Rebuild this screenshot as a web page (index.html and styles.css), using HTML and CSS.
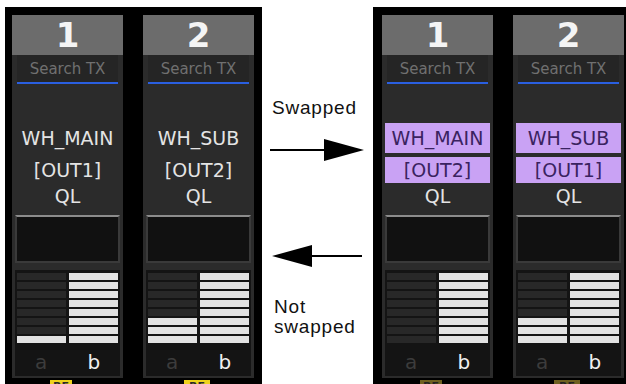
FILE: index.html
```html
<!DOCTYPE html>
<html>
<head>
<meta charset="utf-8">
<link rel="stylesheet" href="styles.css">
</head>
<body>
<div class="panel panel-left">
  <div class="col">
    <div class="strip">
      <div class="hdr">1</div>
      <div class="search">Search TX</div>
      <div class="name">WH_MAIN</div>
      <div class="out">[OUT1]</div>
      <div class="ql">QL</div>
      <div class="box"></div>
      <div class="meter">
        <div class="mcol"><i class="seg"></i><i class="seg"></i><i class="seg"></i><i class="seg"></i><i class="seg"></i><i class="seg"></i><i class="seg"></i><i class="seg on"></i></div>
        <div class="mcol"><i class="seg on"></i><i class="seg on"></i><i class="seg on"></i><i class="seg on"></i><i class="seg on"></i><i class="seg on"></i><i class="seg on"></i><i class="seg on"></i></div>
      </div>
      <div class="labels"><span class="la">a</span><span class="lb">b</span></div>
    </div>
    <div class="tag">RE</div>
  </div>
  <div class="col">
    <div class="strip">
      <div class="hdr">2</div>
      <div class="search">Search TX</div>
      <div class="name">WH_SUB</div>
      <div class="out">[OUT2]</div>
      <div class="ql">QL</div>
      <div class="box"></div>
      <div class="meter">
        <div class="mcol"><i class="seg"></i><i class="seg"></i><i class="seg"></i><i class="seg"></i><i class="seg"></i><i class="seg on"></i><i class="seg on"></i><i class="seg on"></i></div>
        <div class="mcol"><i class="seg on"></i><i class="seg on"></i><i class="seg on"></i><i class="seg on"></i><i class="seg on"></i><i class="seg on"></i><i class="seg on"></i><i class="seg on"></i></div>
      </div>
      <div class="labels"><span class="la">a</span><span class="lb">b</span></div>
    </div>
    <div class="tag tag-2">RE</div>
  </div>
</div>

<div class="middle">
  <div class="caption caption-top">Swapped</div>
  <svg class="arrow arrow-right" width="100" height="24" viewBox="0 0 100 24">
    <line x1="6" y1="12" x2="62" y2="12" stroke="#000" stroke-width="2"/>
    <polygon points="60,1 100,12 60,23" fill="#000"/>
  </svg>
  <svg class="arrow arrow-left" width="100" height="24" viewBox="0 0 100 24">
    <line x1="40" y1="12" x2="101" y2="12" stroke="#000" stroke-width="2"/>
    <polygon points="10,12 50,1 50,23" fill="#000"/>
  </svg>
  <div class="caption caption-bottom">Not<br>swapped</div>
</div>

<div class="panel panel-right">
  <div class="col">
    <div class="strip">
      <div class="hdr">1</div>
      <div class="search">Search TX</div>
      <div class="name hl">WH_MAIN</div>
      <div class="out hl">[OUT2]</div>
      <div class="ql">QL</div>
      <div class="box"></div>
      <div class="meter">
        <div class="mcol"><i class="seg"></i><i class="seg"></i><i class="seg"></i><i class="seg"></i><i class="seg"></i><i class="seg"></i><i class="seg"></i><i class="seg"></i></div>
        <div class="mcol"><i class="seg on"></i><i class="seg on"></i><i class="seg on"></i><i class="seg on"></i><i class="seg on"></i><i class="seg on"></i><i class="seg on"></i><i class="seg on"></i></div>
      </div>
      <div class="labels"><span class="la">a</span><span class="lb">b</span></div>
    </div>
    <div class="tag dim">RE</div>
  </div>
  <div class="col">
    <div class="strip">
      <div class="hdr">2</div>
      <div class="search">Search TX</div>
      <div class="name hl">WH_SUB</div>
      <div class="out hl">[OUT1]</div>
      <div class="ql">QL</div>
      <div class="box"></div>
      <div class="meter">
        <div class="mcol"><i class="seg"></i><i class="seg"></i><i class="seg"></i><i class="seg"></i><i class="seg"></i><i class="seg on"></i><i class="seg on"></i><i class="seg on"></i></div>
        <div class="mcol"><i class="seg on"></i><i class="seg on"></i><i class="seg on"></i><i class="seg on"></i><i class="seg on"></i><i class="seg on"></i><i class="seg on"></i><i class="seg on"></i></div>
      </div>
      <div class="labels"><span class="la">a</span><span class="lb">b</span></div>
    </div>
    <div class="tag dim tag-2">RE</div>
  </div>
</div>
</body>
</html>
```

FILE: styles.css
```css
html, body {
  margin: 0;
  padding: 0;
}
body {
  width: 626px;
  height: 384px;
  overflow: hidden;
  background: #fff;
  display: flex;
  align-items: flex-start;
  padding-top: 7px;
  box-sizing: border-box;
  font-family: "DejaVu Sans", sans-serif;
}
.panel {
  background: #000;
  height: 400px;
  display: flex;
  gap: 20px;
  padding-top: 8px;
  box-sizing: border-box;
}
.panel-left {
  margin-left: 5px;
  width: 257px;
  padding-left: 7px;
}
.panel-right {
  width: 253px;
  padding-left: 9px;
}
.col {
  width: 111px;
  display: flex;
  flex-direction: column;
}
.strip {
  background: #2b2b2b;
  display: flex;
  flex-direction: column;
  padding-bottom: 2px;
}
.hdr {
  height: 40px;
  background: #6c6c6c;
  color: #f4f4f4;
  font-weight: bold;
  font-size: 34px;
  line-height: 40px;
  text-align: center;
}
.search {
  height: 27px;
  margin: 0 5px;
  border-bottom: 2px solid #2a5fe0;
  background: #252525;
  color: #707070;
  font-size: 15px;
  line-height: 29px;
  text-align: center;
}
.name, .out, .ql {
  margin: 0 3px;
  color: #e4e4e4;
  font-size: 19px;
  text-align: center;
}
.name {
  margin-top: 39px;
  height: 30px;
  line-height: 30px;
}
.out {
  margin-top: 4px;
  height: 26px;
  line-height: 26px;
}
.ql {
  height: 26px;
  line-height: 26px;
}
.hl {
  background: #c9a2f4;
  color: #3a2260;
}
.box {
  margin: 6px 3px 0;
  height: 44px;
  background: #111;
  border: 2px solid #3a3a3a;
  border-top-color: #8c8c8c;
}
.meter {
  margin: 7px 3px 0;
  height: 78px;
  box-sizing: border-box;
  padding: 3px 2px;
  background: #141414;
  display: grid;
  grid-template-columns: 1fr 1fr;
  gap: 3px;
}
.mcol {
  display: flex;
  flex-direction: column;
  gap: 2.3px;
}
.seg {
  display: block;
  height: 6.7px;
  background: #282828;
}
.seg.on {
  background: #e2e2e2;
}
.labels {
  margin: 0 3px;
  height: 28px;
  background: #141414;
  display: grid;
  grid-template-columns: 1fr 1fr;
  font-size: 20px;
  line-height: 28px;
  text-align: center;
}
.la { color: #3c3c3c; }
.lb { color: #f0f0f0; }
.tag {
  margin-top: 2px;
  margin-left: 38px;
  width: 22px;
  height: 12px;
  background: #eed21c;
  color: #2a2a2a;
  font-size: 11px;
  font-weight: bold;
  line-height: 13px;
  text-align: center;
}
.tag-2 { margin-left: 41px; width: 26px; }
.tag.dim { background: #6e6020; color: #222; }
.middle {
  width: 111px;
  display: flex;
  flex-direction: column;
  font-family: "Liberation Sans", Arial, sans-serif;
  color: #111;
}
.caption {
  font-size: 19px;
  letter-spacing: 0.8px;
  padding-left: 10px;
}
.caption-top {
  margin-top: 89px;
  line-height: 24px;
}
.arrow { display: block; }
.arrow-right {
  margin-top: 18px;
  margin-left: 2px;
}
.arrow-left {
  margin-top: 82px;
}
.caption-bottom {
  margin-top: 29px;
  line-height: 20px;
  padding-left: 12px;
}
```
